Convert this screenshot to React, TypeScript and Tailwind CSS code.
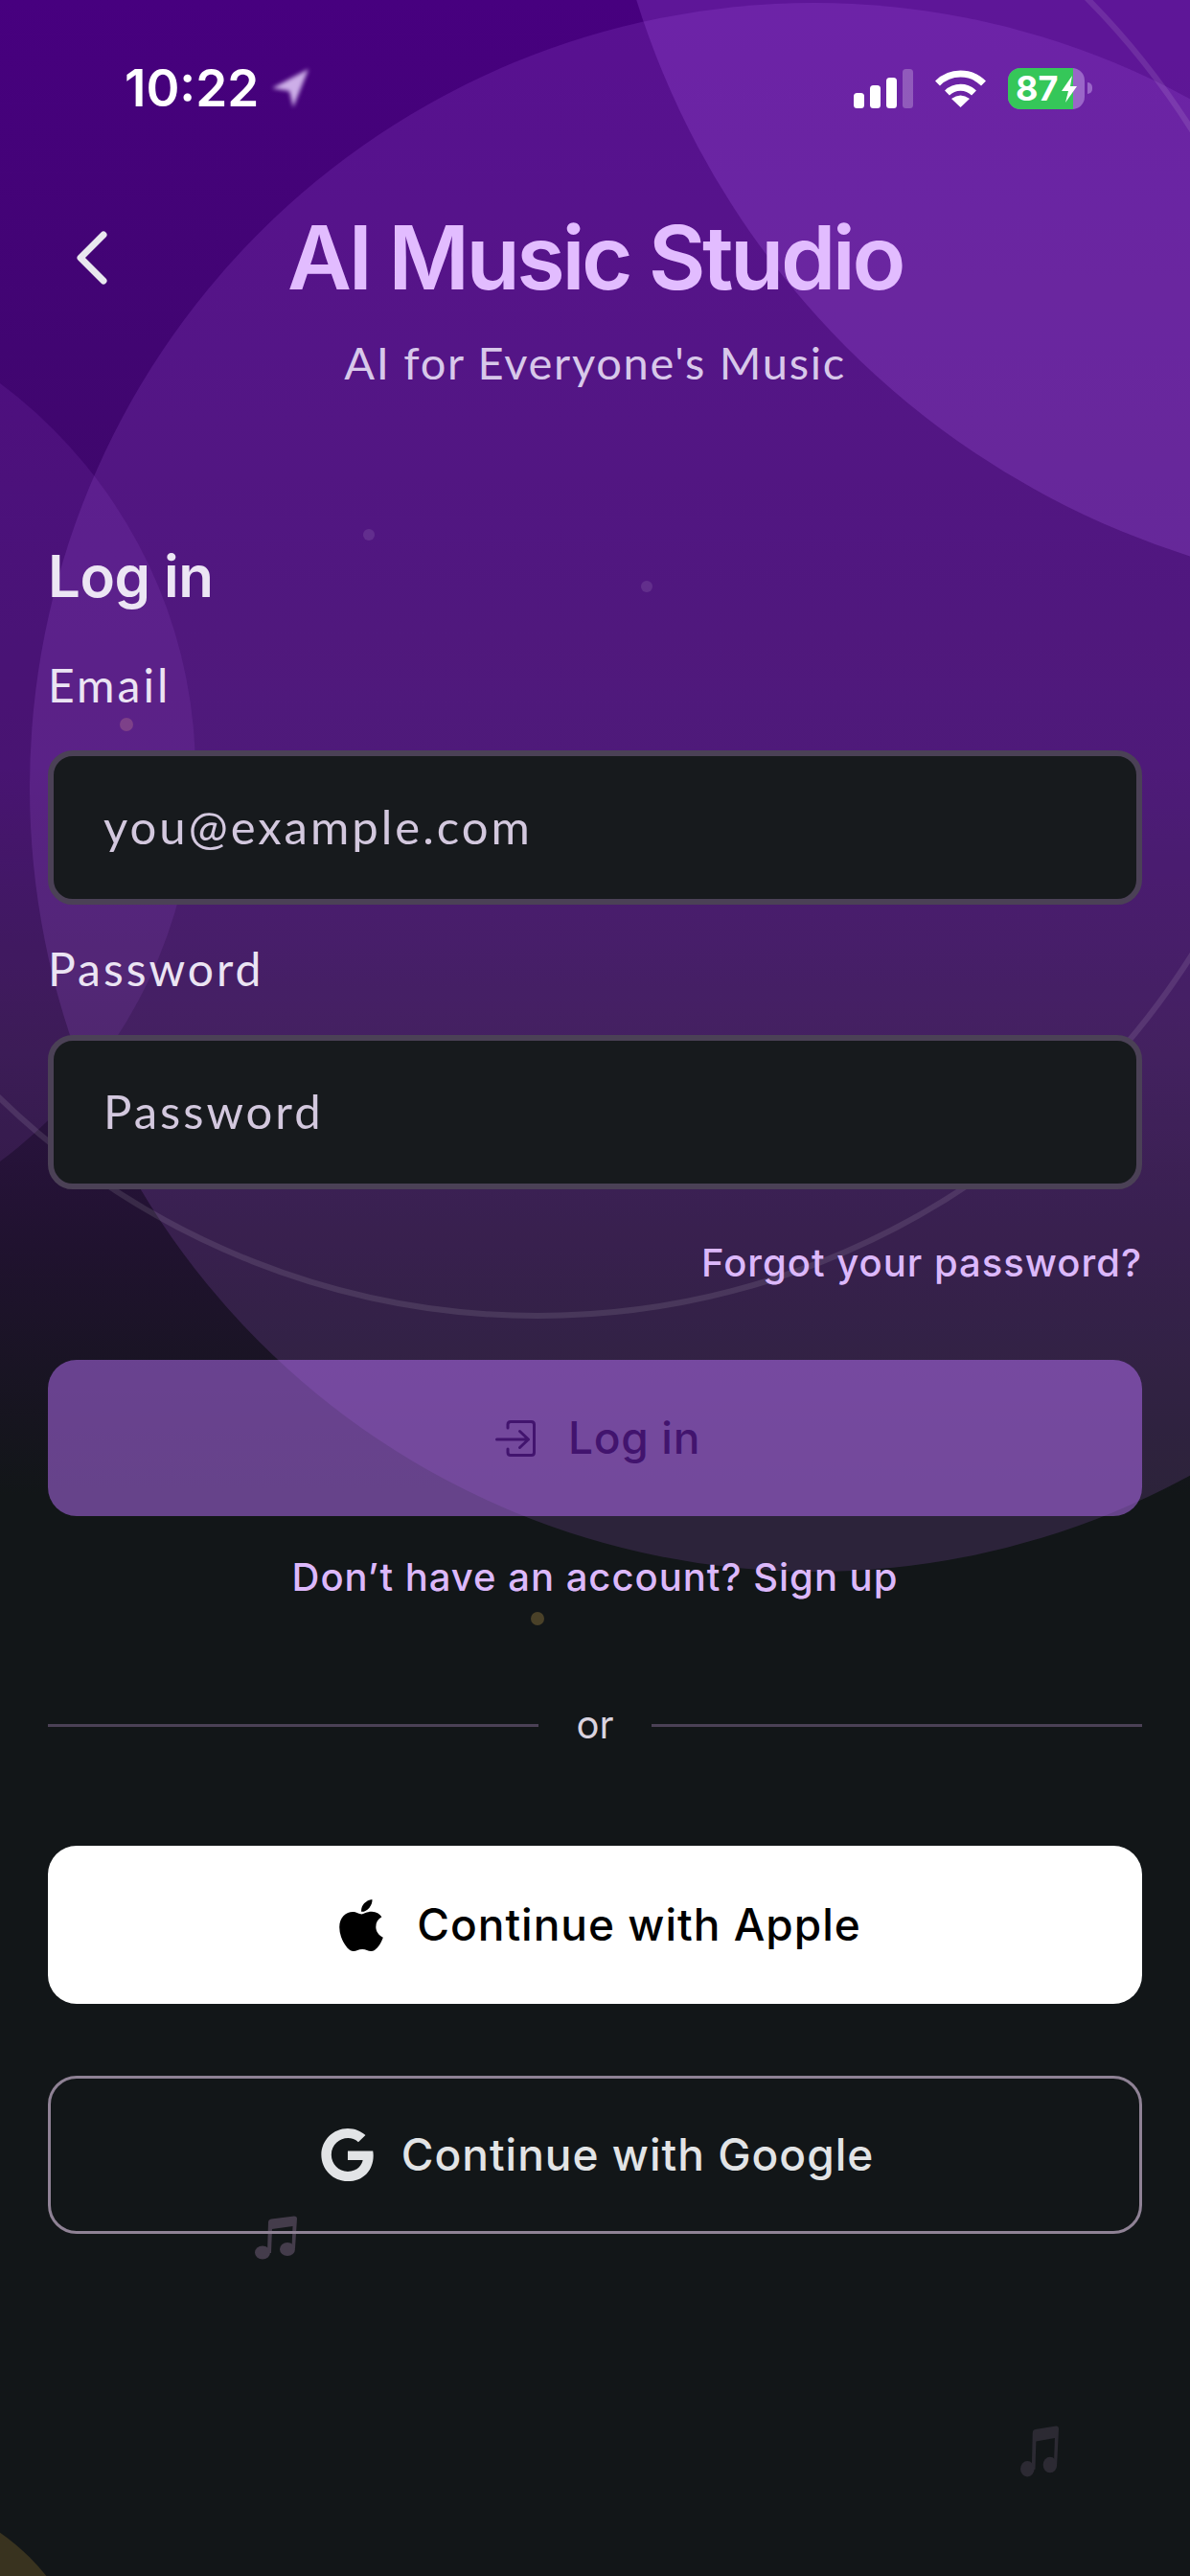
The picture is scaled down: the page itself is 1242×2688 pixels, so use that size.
import { FaApple, FaGoogle } from 'react-icons/fa'

function StatusBar() {
  return (
    <div className="mt-[62px] flex h-[60px] items-center justify-between pl-[130px] pr-[102px]">
      <div className="flex items-center gap-[12px]">
        <span className="font-['Inter',sans-serif] text-[53px] leading-[60px] font-semibold text-white">10:22</span>
        <svg className="h-[42px] w-[42px] blur-[2px]" viewBox="0 0 42 42">
          <path d="M40 1 L2 21 L20 24 L24 41 Z" fill="#cdaee8" />
        </svg>
      </div>
      <div className="flex items-center">
        {/* signal */}
        <svg className="h-[42px] w-[62px]" viewBox="0 0 62 42">
          <rect x="0" y="26" width="11" height="16" rx="3.5" fill="#fff" />
          <rect x="17" y="18" width="11" height="24" rx="3.5" fill="#fff" />
          <rect x="34" y="10" width="11" height="32" rx="3.5" fill="#fff" />
          <rect x="51" y="1" width="11" height="41" rx="3.5" fill="#fff" fillOpacity="0.25" />
        </svg>
        {/* wifi */}
        <svg className="ml-[22px] h-[42px] w-[55px]" viewBox="0 0 55 42">
          <path d="M3.5 16 A34 34 0 0 1 51.5 16" fill="none" stroke="#fff" strokeWidth="7" />
          <path d="M13.5 26 A20 20 0 0 1 41.500 26" fill="none" stroke="#fff" strokeWidth="7" />
          <path d="M27.500 41 L18 32 Q27.500 25 37 32 Z" fill="#fff" />
        </svg>
        {/* battery */}
        <div className="relative ml-[22px] flex h-[43px] w-[80px] overflow-hidden rounded-[13px] bg-[#9a66c8]">
          <div className="flex h-full w-[68px] items-center bg-[#35c759] pl-[8px]">
            <span className="font-['Inter',sans-serif] text-[36px] leading-none font-bold text-white">87</span>
          </div>
          <svg className="absolute left-[56px] top-[8px] h-[28px] w-[16px]" viewBox="0 0 16 28">
            <path d="M11 0 L0 16 L7 16 L4 28 L16 11 L9 11 Z" fill="#fff" />
          </svg>
        </div>
        <div className="ml-[3px] h-[12px] w-[5px] rounded-r-full bg-[#9a66c8]" />
      </div>
    </div>
  )
}

function Field({ label, placeholder, labelMt, inputMt }: { label: string; placeholder: string; labelMt: string; inputMt: string }) {
  return (
    <>
      <label className={`${labelMt} block font-['Lato',sans-serif] text-[48px] leading-[56px] tracking-[3px] text-[#ebe4f3]`}>{label}</label>
      <input
        placeholder={placeholder}
        className={`${inputMt} block h-[161px] w-full rounded-[26px] border-[6px] border-[#4b4156] bg-[#171a1d] px-[52px] pb-[3px] font-['Lato',sans-serif] text-[49px] tracking-[3px] text-white placeholder:text-[#d3c8de] placeholder:opacity-100 outline-none`}
      />
    </>
  )
}

function Note({ className }: { className: string }) {
  return (
    <svg className={className} viewBox="0 0 44 46" preserveAspectRatio="none" fill="currentColor">
      <path d="M14 7 Q14 4 17 3.500 L41 0.500 Q44 0.500 44 3 L42 34 L38.500 34 L39.500 11 L18 14 L17 39 L13 39 Z" />
      <ellipse cx="8" cy="38.500" rx="8" ry="7" />
      <ellipse cx="34" cy="35" rx="8" ry="7" />
    </svg>
  )
}

export default function App() {
  return (
    <div className="relative h-[2688px] w-full overflow-hidden bg-[linear-gradient(180deg,#47007f_0px,#3a0b62_800px,#2d1344_1100px,#20122f_1300px,#121618_1560px)]">
      {/* background shapes */}
      <div className="absolute left-[-808px] top-[300px] h-[1012px] w-[1012px] rounded-full bg-[#c070ff]/10" />
      <div className="absolute left-[31px] top-[3px] h-[1637px] w-[1637px] rounded-full bg-[#c070ff]/15" />
      <div className="absolute left-[624px] top-[-1150px] h-[1772px] w-[1772px] rounded-full bg-[#c070ff]/20" />
      <div className="absolute left-[-249px] top-[-244px] h-[1620px] w-[1620px] rounded-full border-[6px] border-white/10" />
      <div className="absolute left-[379px] top-[552px] h-[12px] w-[12px] rounded-full bg-white/10" />
      <div className="absolute left-[669px] top-[606px] h-[12px] w-[12px] rounded-full bg-white/10" />
      <div className="absolute left-[125px] top-[749px] h-[14px] w-[14px] rounded-full bg-[#a0608c]/50" />
      <div className="absolute left-[554px] top-[1682px] h-[14px] w-[14px] rounded-full bg-[#4a4128]" />
      <div className="absolute left-[-358px] top-[2602px] h-[456px] w-[456px] rounded-full bg-[#39331f]" />
      <Note className="absolute left-[266px] top-[2312px] h-[46px] w-[44px] text-[#443c4b]" />
      <Note className="absolute left-[1065px] top-[2531px] h-[54px] w-[40px] text-[#2c2a33]" />

      <div className="relative">
        <StatusBar />

        {/* header */}
        <div className="mt-[92px] grid h-[110px] grid-cols-[1fr_auto_1fr] items-center">
          <svg className="ml-[78px] h-[56px] w-[34px]" viewBox="0 0 34 56">
            <path d="M30 4 L6 28 L30 52" fill="none" stroke="#e9e8ef" strokeWidth="7" strokeLinecap="round" strokeLinejoin="round" />
          </svg>
          <h1 className="font-['Inter',sans-serif] text-[92px] leading-[110px] font-semibold tracking-[-3.5px] text-[#e2bcff]">AI Music Studio</h1>
          <div />
        </div>
        <p className="mt-[24px] text-center font-['Lato',sans-serif] text-[47px] leading-[60px] tracking-[1.7px] text-[#d8c8ea]">AI for Everyone's Music</p>

        <div className="flex flex-col px-[50px]">
          <h2 className="mt-[155px] font-['Inter',sans-serif] text-[60px] leading-[76px] font-semibold tracking-[-0.5px] text-[#ece6f4]">Log in</h2>
          <Field label="Email" placeholder="you@example.com" labelMt="mt-[48px]" inputMt="mt-[40px]" />
          <Field label="Password" placeholder="Password" labelMt="mt-[39px]" inputMt="mt-[41px]" />

          <a className="mt-[52px] block text-right font-['Inter',sans-serif] text-[40px] leading-[50px] font-medium tracking-[1px] text-[#dcb8fb]">Forgot your password?</a>

          <button className="mt-[76px] flex h-[163px] items-center justify-center gap-[34px] rounded-[30px] bg-[#ba70fc]/50 pl-[6px] font-['Inter',sans-serif] text-[46px] font-medium tracking-[0.7px] text-[#42146e]">
            <svg className="h-[38px] w-[42px]" viewBox="0 0 42 38" fill="none" stroke="currentColor" strokeWidth="3" strokeLinecap="round" strokeLinejoin="round">
              <path d="M13 8 V4.500 Q13 1.500 16 1.500 H37.500 Q40.500 1.500 40.500 4.500 V33.500 Q40.500 36.500 37.500 36.500 H16 Q13 36.500 13 33.500 V30" />
              <path d="M1.500 20 H34.500 M25.500 11.500 L34.500 20 L25.500 28.500" />
            </svg>
            Log in
          </button>

          <p className="mt-[39px] text-center font-['Inter',sans-serif] text-[40px] leading-[50px] font-medium tracking-[1px] text-[#dcb8fb]">Don’t have an account? Sign up</p>

          <div className="mt-[104px] flex h-[50px] items-center">
            <div className="h-[3px] flex-1 bg-[#4b4156]" />
            <span className="w-[118px] text-center font-['Inter',sans-serif] text-[40px] text-[#d9d3df]">or</span>
            <div className="h-[3px] flex-1 bg-[#4b4156]" />
          </div>

          <button className="mt-[101px] flex h-[165px] items-center justify-center gap-[27px] rounded-[30px] bg-white pl-[3px] font-['Inter',sans-serif] text-[46px] font-medium tracking-[1px] text-black">
            <FaApple className="text-[62px]" />
            Continue with Apple
          </button>

          <button className="mt-[75px] flex h-[165px] items-center justify-center gap-[28px] rounded-[30px] border-[3px] border-[#8f8295] pl-[4px] font-['Inter',sans-serif] text-[46px] font-medium tracking-[1px] text-[#e2e4e6]">
            <FaGoogle className="text-[57px]" />
            Continue with Google
          </button>
        </div>
      </div>
    </div>
  )
}
